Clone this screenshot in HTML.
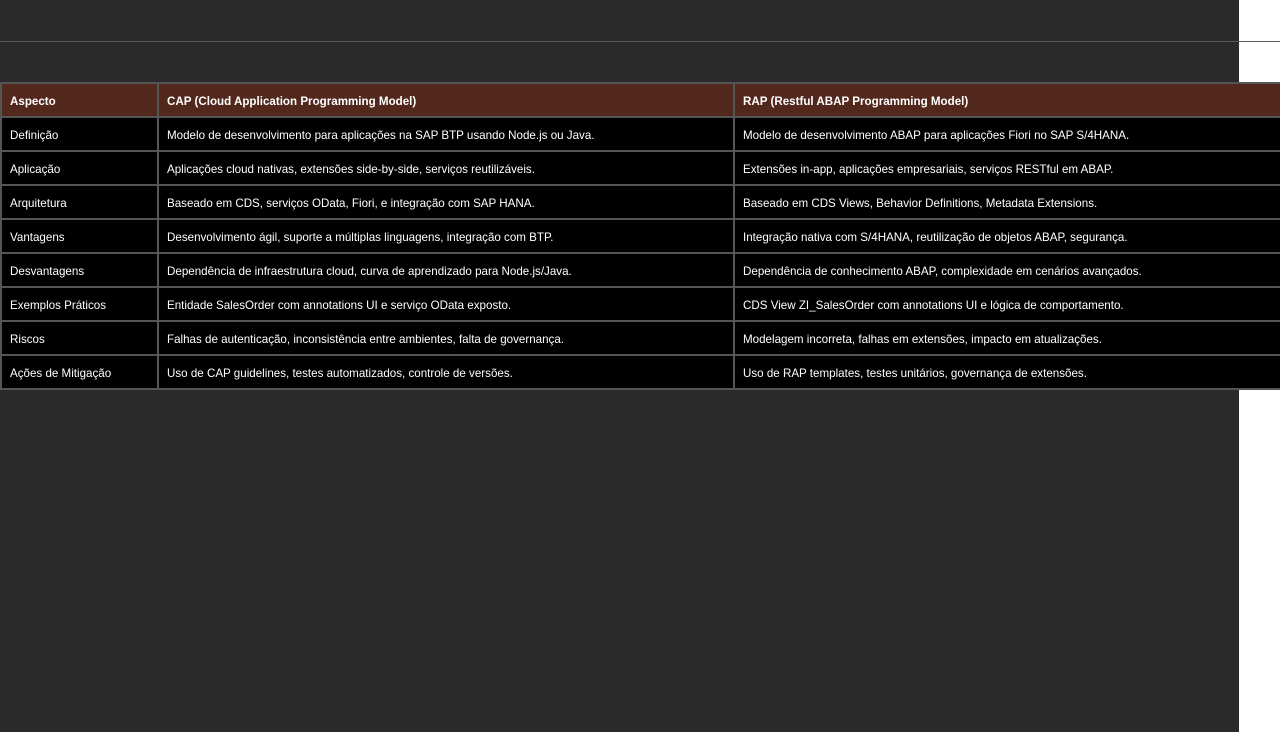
<!DOCTYPE html>
<html><head><meta charset="utf-8"><style>
html,body{margin:0;padding:0;width:1280px;height:732px;overflow:hidden;background:#fff;}
.bg{position:absolute;left:0;top:0;width:1239px;height:732px;background:#2a2a2a;}
.line{position:absolute;left:0;top:41px;width:1280px;height:1px;background:#5a5a5a;}
table{position:absolute;left:0;top:82px;width:1280px;border-collapse:collapse;font-family:"Liberation Sans",sans-serif;font-size:11.6px;color:#fff;table-layout:fixed;}
td,th{border:2px solid #555;height:32px;box-sizing:border-box;padding:3px 0 0 8px;text-align:left;background:#000;white-space:nowrap;overflow:hidden;}
tr{height:34px;}
th{background:#52271c;font-weight:bold;}
</style></head><body>
<div class="bg"></div><div class="line"></div>
<table>
<colgroup><col style="width:157px"><col style="width:576px"><col style="width:547px"></colgroup>
<tr><th>Aspecto</th><th>CAP (Cloud Application Programming Model)</th><th>RAP (Restful ABAP Programming Model)</th></tr>
<tr><td>Definição</td><td>Modelo de desenvolvimento para aplicações na SAP BTP usando Node.js ou Java.</td><td>Modelo de desenvolvimento ABAP para aplicações Fiori no SAP S/4HANA.</td></tr>
<tr><td>Aplicação</td><td>Aplicações cloud nativas, extensões side-by-side, serviços reutilizáveis.</td><td>Extensões in-app, aplicações empresariais, serviços RESTful em ABAP.</td></tr>
<tr><td>Arquitetura</td><td>Baseado em CDS, serviços OData, Fiori, e integração com SAP HANA.</td><td>Baseado em CDS Views, Behavior Definitions, Metadata Extensions.</td></tr>
<tr><td>Vantagens</td><td>Desenvolvimento ágil, suporte a múltiplas linguagens, integração com BTP.</td><td>Integração nativa com S/4HANA, reutilização de objetos ABAP, segurança.</td></tr>
<tr><td>Desvantagens</td><td>Dependência de infraestrutura cloud, curva de aprendizado para Node.js/Java.</td><td>Dependência de conhecimento ABAP, complexidade em cenários avançados.</td></tr>
<tr><td>Exemplos Práticos</td><td>Entidade SalesOrder com annotations UI e serviço OData exposto.</td><td>CDS View ZI_SalesOrder com annotations UI e lógica de comportamento.</td></tr>
<tr><td>Riscos</td><td>Falhas de autenticação, inconsistência entre ambientes, falta de governança.</td><td>Modelagem incorreta, falhas em extensões, impacto em atualizações.</td></tr>
<tr><td>Ações de Mitigação</td><td>Uso de CAP guidelines, testes automatizados, controle de versões.</td><td>Uso de RAP templates, testes unitários, governança de extensões.</td></tr>
</table>
</body></html>
